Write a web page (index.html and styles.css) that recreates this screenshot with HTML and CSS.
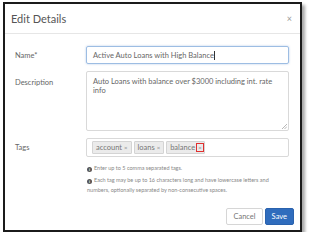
FILE: index.html
```html
<!DOCTYPE html>
<html lang="en">
<head>
<meta charset="UTF-8">
<title>Edit Details</title>
<link rel="stylesheet" href="styles.css">
</head>
<body>
<div class="frame">
    <div class="mhead">
        <span class="mtitle">Edit Details</span>
        <span class="mclose">&times;</span>
    </div>
    <div class="mbody">
        <div class="row">
            <label class="lbl">Name*</label>
            <div class="field inp focus">Active Auto Loans with High Balance<span class="caret"></span></div>
        </div>
        <div class="row">
            <label class="lbl top">Description</label>
            <div class="field area">Auto Loans with balance over $3000 including int. rate info
                <svg class="grip" width="5" height="5" viewBox="0 0 5 5"><path d="M0 5L5 0M2.5 5L5 2.5" stroke="#999" stroke-width=".7"/></svg>
            </div>
        </div>
        <div class="row tagsrow">
            <label class="lbl">Tags</label>
            <div class="field tags">
                <span class="tag">account <span class="x">&times;</span></span>
                <span class="tag">loans <span class="x">&times;</span></span>
                <span class="tag">balance<span class="x hl">&times;</span></span>
            </div>
        </div>
        <div class="help">
            <p><span class="ico">i</span>Enter up to 5 comma separated tags.</p>
            <p><span class="ico">i</span>Each tag may be up to 16 characters long and have lowercase letters and numbers, optionally separated by non-consecutive spaces.</p>
        </div>
    </div>
    <div class="mfoot">
        <button class="btn cancel">Cancel</button>
        <button class="btn save">Save</button>
    </div>
</div>
</body>
</html>
```

FILE: styles.css
```css
body{
    margin: 0;
    background: #fff;
    font-family: Lato, "Open Sans", sans-serif;
    color: #666;
}
.frame{
    margin: 2px 0 0 3px;
    width: 299px;
    height: 230px;
    box-sizing: border-box;
    border: 2px solid #1b1b1b;
    box-shadow: 3px 3px 3px rgba(0,0,0,0.35);
    display: flex;
    flex-direction: column;
}
.mhead{
    height: 29px;
    border-bottom: 1px solid #e6e6e6;
    display: flex;
    align-items: center;
    justify-content: space-between;
    padding: 0 8px 0 6px;
}
.mtitle{
    font-size: 11px;
    color: #555;
}
.mclose{
    font-size: 9px;
    color: #999;
}
.mbody{
    padding: 12px 11px 0 10px;
}
.row{
    display: flex;
    align-items: center;
    margin-bottom: 7px;
}
.lbl{
    width: 71px;
    flex: none;
    font-size: 7.5px;
    color: #666;
}
.lbl.top{
    align-self: flex-start;
    padding-top: 7px;
}
.field{
    flex: 1;
    box-sizing: border-box;
    border: 1px solid #d9d9d9;
    border-radius: 2px;
    font-size: 7.5px;
    color: #666;
}
.inp{
    height: 18px;
    padding: 0 6px;
    display: flex;
    align-items: center;
}
.focus{
    border-color: #9dbde3;
    box-shadow: 0 0 2px rgba(90,140,210,0.5);
}
.caret{
    display: inline-block;
    width: 1px;
    height: 9px;
    background: #333;
}
.area{
    height: 60px;
    padding: 5px 6px;
    line-height: 9px;
    position: relative;
}
.grip{
    position: absolute;
    right: 1px;
    bottom: 1px;
}
.tagsrow{
    margin-bottom: 6px;
}
.tags{
    height: 19px;
    padding: 0 5px;
    display: flex;
    align-items: center;
    gap: 2px;
}
.tag{
    background: #ebebeb;
    border: 1px solid #d4d4d4;
    border-radius: 1px;
    height: 11px;
    line-height: 11px;
    padding: 0 0 0 3px;
    font-size: 7.5px;
    color: #777;
    display: flex;
    align-items: center;
}
.tag .x{
    font-size: 6px;
    padding: 0 3px 0 2px;
    color: #888;
}
.tag .hl{
    border: 1.5px solid #e0302f;
    padding: 0 1px;
    margin-left: 1px;
    height: 7px;
    line-height: 7px;
}
.help{
    margin-left: 72px;
    font-size: 5.5px;
    color: #888;
}
.help p{
    margin: 0 0 2px;
    line-height: 10px;
}
.ico{
    display: inline-block;
    width: 5px;
    height: 5px;
    border-radius: 50%;
    background: #555;
    color: #fff;
    font-size: 4px;
    line-height: 5px;
    text-align: center;
    font-weight: 700;
    margin-right: 2px;
    vertical-align: -0.5px;
}
.mfoot{
    margin-top: auto;
    display: flex;
    justify-content: flex-end;
    gap: 2px;
    padding: 0 6px 5px 0;
}
.btn{
    font-family: inherit;
    font-size: 7.5px;
    height: 17px;
    border-radius: 2px;
    padding: 0 6px;
}
.cancel{
    background: #fff;
    border: 1px solid #d6d6d6;
    color: #777;
}
.save{
    background: #2f6cbd;
    border: 1px solid #2a62ad;
    color: #fff;
}
```
